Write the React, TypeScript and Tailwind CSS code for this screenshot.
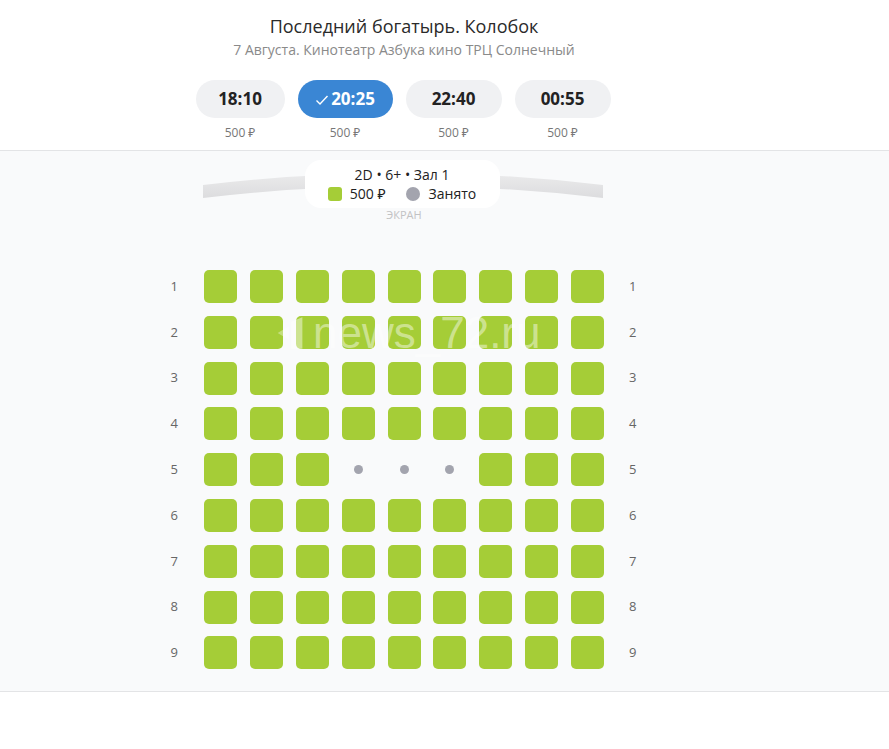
import React from 'react';

const sessions = [
  { time: '18:10', price: '500 ₽', active: false, w: 'w-[89px]' },
  { time: '20:25', price: '500 ₽', active: true, w: 'w-[95px]' },
  { time: '22:40', price: '500 ₽', active: false, w: 'w-[96px]' },
  { time: '00:55', price: '500 ₽', active: false, w: 'w-[96px]' },
];

const rows = [1, 2, 3, 4, 5, 6, 7, 8, 9];
const cols = [1, 2, 3, 4, 5, 6, 7, 8, 9];

// row 5 seats 4-6 are taken
const isTaken = (row: number, col: number) => row === 5 && col >= 4 && col <= 6;

const Seat: React.FC<{ taken: boolean }> = ({ taken }) =>
  taken ? (
    <div className="w-[33px] h-[33px] flex items-center justify-center">
      <div className="w-[9px] h-[9px] rounded-full bg-[#a3a4ae]" />
    </div>
  ) : (
    <div className="w-[33px] h-[33px] rounded-[5px] bg-[#a5cd37]" />
  );

const App: React.FC = () => {
  return (
    <div className="w-[889px] h-[749px] bg-white text-[#222] overflow-hidden" style={{ fontFamily: '"Open Sans", "Noto Sans", sans-serif' }}>
      {/* header */}
      <div className="w-[808px] h-[140px] flex flex-col items-center pt-[13px]">
        <h1 className="text-[18px] leading-[26px] text-[#2a2a2a]">Последний богатырь. Колобок</h1>
        <p className="text-[14px] leading-[20px] text-[#8a8a8a] mt-[1px]">7 Августа. Кинотеатр Азбука кино ТРЦ Солнечный</p>

        <div className="flex gap-[13px] mt-[20px] ml-[-2px]">
          {sessions.map((s) => (
            <div key={s.time} className={`${s.w} flex flex-col items-center`}>
              <div
                className={`w-full h-[38px] rounded-full flex items-center justify-center text-[17px] font-bold ${
                  s.active ? 'bg-[#3a86d4] text-white' : 'bg-[#f0f1f3] text-[#222]'
                }`}
              >
                {s.active && (
                  <svg width="14" height="14" viewBox="0 0 14 14" className="mr-[2px] mt-[1px]">
                    <path d="M1.5 7.5 L5 11 L12.5 3" fill="none" stroke="white" strokeWidth="1.4" />
                  </svg>
                )}
                {s.time}
              </div>
              <span className="text-[12px] leading-[16px] text-[#777] mt-[7px]">{s.price}</span>
            </div>
          ))}
        </div>
      </div>

      {/* hall */}
      <div className="mt-[10px] border-t border-b border-[#e3e4e6] bg-[#f9fafb] h-[542px] relative">
        <div className="w-[808px] flex flex-col items-center">
          <div className="relative w-[400px] h-[46px] mt-[9px] ml-[-3px]">
            <svg width="400" height="30" viewBox="0 0 400 30" className="absolute left-0 top-[9px]">
              <defs>
                <linearGradient id="scr" x1="0" y1="0" x2="0" y2="1">
                  <stop offset="0" stopColor="#ebebec" />
                  <stop offset="1" stopColor="#dcdcde" />
                </linearGradient>
              </defs>
              <path d="M0 16 Q200 -8 400 16 L400 29 Q200 5 0 29 Z" fill="url(#scr)" />
            </svg>
            <div className="absolute left-[102px] top-0 w-[195px] h-[48px] rounded-2xl bg-white flex flex-col items-center justify-center">
              <span className="text-[14px] leading-[19px] text-[#222]">2D • 6+ • Зал 1</span>
              <div className="flex items-center text-[14px] leading-[19px] text-[#222]">
                <span className="w-[14px] h-[14px] rounded-[3px] bg-[#a5cd37] mr-[8px]" />
                <span>500 ₽</span>
                <span className="w-[14px] h-[14px] rounded-full bg-[#a3a4ae] ml-[20px] mr-[9px]" />
                <span>Занято</span>
              </div>
            </div>
          </div>
          <span className="text-[11px] leading-[14px] text-[#c2c2c4] mt-[2px]">ЭКРАН</span>

          <div className="flex flex-col gap-[12.8px] mt-[48px] ml-[-1px]">
            {rows.map((r) => (
              <div key={r} className="flex items-center">
                <span className="w-[30px] mr-[15px] text-center text-[13px] text-[#666]">{r}</span>
                <div className="flex gap-[12.8px]">
                  {cols.map((c) => (
                    <Seat key={c} taken={isTaken(r, c)} />
                  ))}
                </div>
                <span className="w-[30px] ml-[14px] text-center text-[13px] text-[#666]">{r}</span>
              </div>
            ))}
          </div>
        </div>

        {/* watermark */}
        <div
          className="absolute left-[275px] top-[160px] flex items-center text-[44px] leading-none text-white/45 pointer-events-none select-none"
          style={{ fontFamily: '"Liberation Sans", sans-serif', fontWeight: 300 }}
        >
          <svg width="30" height="36" viewBox="0 0 26 32" className="mr-[8px]">
            <path d="M2 16 L12 10 L12 22 Z" fill="rgba(255,255,255,0.35)" />
            <path d="M14 6 L24 2 L24 30 L14 30 Z" fill="rgba(255,255,255,0.45)" />
          </svg>
          news_72.ru
        </div>
      </div>
    </div>
  );
};

export default App;
